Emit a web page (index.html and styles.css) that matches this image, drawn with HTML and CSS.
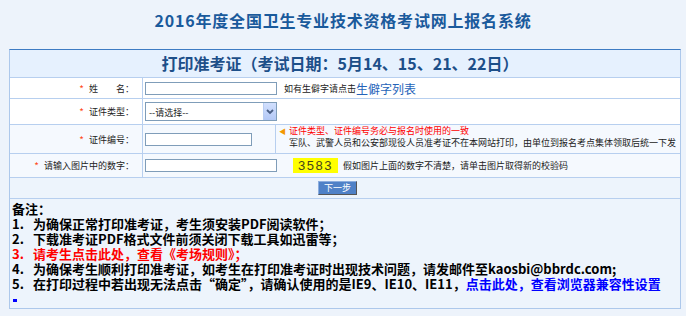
FILE: index.html
```html
<!DOCTYPE html>
<html lang="zh-CN">

<head>
    <meta charset="UTF-8">
    <title>2016年度全国卫生专业技术资格考试网上报名系统</title>
    <link rel="stylesheet" href="styles.css">
</head>

<body>
    <h1 class="site-title">2016年度全国卫生专业技术资格考试网上报名系统</h1>

    <div class="panel">
        <div class="panel-head">打印准考证（考试日期：5月14、15、21、22日）</div>

        <div class="form-row row-name">
            <div class="label"><span class="req">*</span>姓&emsp;&emsp;名：</div>
            <div class="field">
                <input class="txt" type="text">
                <span class="hint hint-rare">如有生僻字请点击</span><a class="rare-link" href="#">生僻字列表</a>
            </div>
        </div>

        <div class="form-row row-type">
            <div class="label"><span class="req">*</span>证件类型：</div>
            <div class="field">
                <div class="select">
                    <span class="select-text">--请选择--</span>
                    <span class="select-btn">
                        <svg width="8" height="6" viewBox="0 0 8 6">
                            <path d="M1 1 L4 4 L7 1" fill="none" stroke="#4a5f86" stroke-width="1.8"/>
                        </svg>
                    </span>
                </div>
            </div>
        </div>

        <div class="form-row row-id">
            <div class="label"><span class="req">*</span>证件编号：</div>
            <div class="field field-narrow">
                <input class="txt txt-short" type="text">
            </div>
            <div class="tip">
                <span class="tip-arrow">◀</span>
                <div class="tip-lines">
                    <div class="tip-warn">证件类型、证件编号务必与报名时使用的一致</div>
                    <div>军队、武警人员和公安部现役人员准考证不在本网站打印，由单位到报名考点集体领取后统一下发</div>
                </div>
            </div>
        </div>

        <div class="form-row row-code">
            <div class="label"><span class="req">*</span>请输入图片中的数字：</div>
            <div class="field">
                <input class="txt" type="text">
                <span class="captcha">3583</span>
                <span class="hint hint-code">假如图片上面的数字不清楚，请单击图片取得新的校验码</span>
            </div>
        </div>

        <div class="btn-row">
            <button class="btn-next" type="button">下一步</button>
        </div>

        <div class="notes">
            <div>备注：</div>
            <div class="note"><span class="num">1.</span>为确保正常打印准考证，考生须安装PDF阅读软件；</div>
            <div class="note"><span class="num">2.</span>下载准考证PDF格式文件前须关闭下载工具如迅雷等；</div>
            <div class="note note-red"><span class="num">3.</span>请考生点击此处，查看《考场规则》；</div>
            <div class="note"><span class="num">4.</span>为确保考生顺利打印准考证，如考生在打印准考证时出现技术问题，请发邮件至kaosbi@bbrdc.com;</div>
            <div class="note"><span class="num">5.</span>在打印过程中若出现无法点击“确定”，请确认使用的是IE9、IE10、IE11，<a class="note-link" href="#">点击此处，查看浏览器兼容性设置</a></div>
            <div class="dot"></div>
        </div>
    </div>
</body>

</html>
```

FILE: styles.css
```css
body {
    margin: 0;
    background-color: #edf3fb;
    font-family: "Noto Sans CJK SC", sans-serif;
    color: #000;
}

.site-title {
    margin: 10px 0 19px;
    font-size: 16px;
    line-height: 20px;
    letter-spacing: 0.8px;
    text-align: center;
    color: #1a5a9c;
}

.panel {
    margin-left: 9px;
    width: 672px;
    box-sizing: border-box;
    border: 1px solid #adc8eb;
    border-top: 1px solid #3d7bc3;
    background-color: #edf4fc;
}

.panel-head {
    height: 28px;
    box-sizing: border-box;
    padding-right: 10px;
    border-bottom: 1px solid #b7cfef;
    background-color: #e6f1fe;
    font-size: 16px;
    font-weight: bold;
    line-height: 27px;
    text-align: center;
    color: #1d4f89;
}

.form-row {
    display: flex;
    box-sizing: border-box;
    border-bottom: 1px solid #b7cfef;
    background-color: #fff;
    font-size: 9px;
    color: #222;
}

.row-name {
    height: 21px;
}

.row-type {
    height: 26px;
}

.row-id {
    height: 29px;
    background-color: #f5f9fe;
}

.row-code {
    height: 24px;
    background-color: #f5f9fe;
}

.label {
    width: 133px;
    flex: none;
    padding-right: 8px;
    box-sizing: border-box;
    border-right: 1px solid #b7cfef;
    display: flex;
    align-items: center;
    justify-content: flex-end;
    white-space: nowrap;
}

.req {
    color: #ff4a1c;
    margin-right: 5px;
    font-size: 10px;
}

.field {
    flex: 1;
    padding-left: 2px;
    display: flex;
    align-items: center;
    white-space: nowrap;
}

.field-narrow {
    flex: none;
    width: 133px;
    box-sizing: border-box;
    border-right: 1px solid #b7cfef;
}

.txt {
    width: 132px;
    height: 13px;
    box-sizing: border-box;
    margin: 0;
    padding: 0 2px;
    border: 1px solid #7f9db9;
    background-color: #fff;
    font-size: 9px;
}

.txt-short {
    width: 107px;
}

.hint {
    color: #222;
}

.hint-rare {
    margin-left: 7px;
}

.rare-link {
    font-size: 12px;
    color: #2563b9;
    text-decoration: none;
}

.select {
    width: 132px;
    height: 19px;
    box-sizing: border-box;
    border: 1px solid #7f9db9;
    background-color: #fff;
    display: flex;
}

.select-text {
    flex: 1;
    padding-left: 3px;
    font-size: 9px;
    line-height: 19px;
}

.select-btn {
    width: 12px;
    display: flex;
    align-items: center;
    justify-content: center;
    border-left: 1px solid #b9cdf2;
    background: linear-gradient(#d2e0fd, #b3c8f6);
}

.tip {
    flex: 1;
    display: flex;
    padding-left: 3px;
    line-height: 12px;
    white-space: nowrap;
}

.tip-arrow {
    width: 10px;
    font-size: 7px;
    color: #f39800;
}

.tip-warn {
    color: #f00;
}

.captcha {
    margin-left: 16px;
    width: 45px;
    height: 15px;
    background-color: #ffff00;
    font-family: "Liberation Sans", sans-serif;
    font-size: 13px;
    line-height: 15px;
    letter-spacing: 1.5px;
    text-align: center;
    color: #45451c;
}

.hint-code {
    margin-left: 5px;
}

.btn-row {
    height: 21px;
    box-sizing: border-box;
    padding-left: 308px;
    border-bottom: 1px solid #b7cfef;
    display: flex;
    align-items: center;
}

.btn-next {
    width: 39px;
    height: 14px;
    padding: 0;
    border: 1px solid #8cadde;
    border-right-color: #555;
    border-bottom-color: #555;
    background-color: #4f81c7;
    font-family: "Noto Sans CJK SC", sans-serif;
    font-size: 9px;
    line-height: 12px;
    color: #fff;
}

.notes {
    height: 109px;
    box-sizing: border-box;
    padding: 2px 0 0 2px;
    font-size: 13px;
    font-weight: bold;
    line-height: 15px;
    white-space: nowrap;
}

.note {
    display: flex;
}

.num {
    width: 21px;
    flex: none;
}

.note-red {
    color: #f00;
}

.note-link {
    color: #00f;
    text-decoration: none;
}

.dot {
    margin: 8px 0 0 1px;
    width: 4px;
    height: 3px;
    background-color: #00f;
}
```
